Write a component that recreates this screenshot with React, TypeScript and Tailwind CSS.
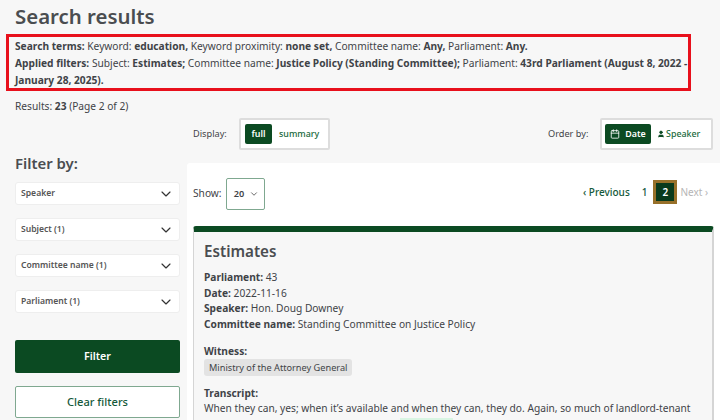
import React from "react";
import { ChevronDown, Calendar, User } from "lucide-react";

function Sel({ label }: { label: string }) {
  return (
    <div className="flex h-[23px] items-center justify-between rounded-[3px] border border-[#eeeeee] bg-white pl-[5px] pr-[5px] text-[8.6px] font-semibold text-[#555555]">
      <span>{label}</span>
      <ChevronDown className="h-[16px] w-[16px] text-[#333333]" strokeWidth={1.75} />
    </div>
  );
}

export default function App() {
  return (
    <div className="relative h-[420px] w-[720px] overflow-hidden bg-[#f7f7f7] font-['Noto_Sans','Open_Sans',sans-serif] text-[#3f4347]">
      <h1 className="h-[34px] pl-[15px] text-[20.4px] font-semibold leading-[32px] text-[#4a4d50]">Search results</h1>
      <div className="mx-[6px] h-[57px] w-[685px] border-[3px] border-[#e8101c] pl-[6px] pr-[2px] pt-[1px] text-[10.2px] leading-[17px]">
        <div><b>Search terms:</b> Keyword: <b>education,</b> Keyword proximity: <b>none set,</b> Committee name: <b>Any,</b> Parliament: <b>Any.</b></div>
        <div className="whitespace-nowrap"><b>Applied filters:</b> Subject: <b>Estimates;</b> Committee name: <b>Justice Policy (Standing Committee);</b> Parliament: <b>43rd Parliament (August 8, 2022 -</b></div>
        <div><b>January 28, 2025).</b></div>
      </div>
      <div className="mt-[7px] pl-[15px] text-[10.2px] leading-[17px]">Results: <b>23</b> (Page 2 of 2)</div>
      <div className="mt-[3px] flex h-[32px] items-center text-[9.2px]">
        <span className="ml-[193px] w-[46px]">Display:</span>
        <div className="flex h-[32px] w-[91px] items-center rounded-[2px] border-2 border-[#dddddd] bg-white pl-[4px] text-[8.9px]">
          <span className="flex h-[20px] w-[27px] items-center justify-center rounded-[2px] bg-[#0b4a22] font-semibold text-white">full</span>
          <span className="ml-[7px] font-medium text-[#1a6a3c]">summary</span>
        </div>
        <span className="ml-[218px] w-[52px]">Order by:</span>
        <div className="flex h-[32px] w-[113px] items-center rounded-[2px] border-2 border-[#dddddd] bg-white pl-[3px] text-[8.9px]">
          <span className="flex h-[20px] w-[46px] items-center justify-center gap-[5px] rounded-[2px] bg-[#0b4a22] font-semibold text-white">
            <Calendar className="h-[10px] w-[10px]" strokeWidth={2} />Date
          </span>
          <span className="ml-[6px] flex items-center gap-[1px] font-medium text-[#1a6a3c]">
            <User className="h-[8px] w-[8px] fill-[#0b4a22] text-[#0b4a22]" strokeWidth={2} />Speaker
          </span>
        </div>
      </div>
      <div className="mt-[13px] flex">
        <aside className="ml-[15px] w-[165px] shrink-0">
          <h2 className="h-[19px] text-[14.9px] font-semibold leading-[1px] text-[#4a4d50]">Filter by:</h2>
          <div className="flex flex-col gap-[13px]">
            <Sel label="Speaker" />
            <Sel label="Subject (1)" />
            <Sel label="Committee name (1)" />
            <Sel label="Parliament (1)" />
          </div>
          <div className="mt-[27px] flex h-[33px] items-center justify-center rounded-[2px] bg-[#0b4a22] text-[10.7px] font-semibold text-white">Filter</div>
          <div className="mt-[13px] flex h-[32px] items-center justify-center rounded-[2px] border border-[#7fa890] bg-white text-[11.1px] font-medium text-[#14593a]">Clear filters</div>
        </aside>
        <main className="ml-[7px] h-[300px] flex-1 rounded-tl-[3px] bg-white pl-[6px]">
          <div className="flex h-[63px] items-start pt-[15px]">
            <span className="mt-[8px] w-[33px] text-[10.2px]">Show:</span>
            <div className="flex h-[32px] w-[39px] items-center justify-center gap-[5px] pl-[2px] rounded-[2px] border border-[#7fa890] text-[9.2px] font-semibold">
              20<ChevronDown className="h-[10px] w-[10px] text-[#333333]" strokeWidth={1.75} />
            </div>
            <div className="ml-[318px] mt-[2px] flex h-[24px] items-center text-[10px]">
              <span className="font-medium text-[#14593a]">‹ Previous</span>
              <span className="ml-[12px] font-medium text-[#14593a]">1</span>
              <span className="ml-[6px] flex h-[24px] w-[24px] items-center justify-center border-[3px] border-[#97702a] bg-[#0a3a1c] font-semibold text-white">2</span>
              <span className="ml-[3px] text-[#b5b5b5]">Next ›</span>
            </div>
          </div>
          <article className="h-[200px] w-[521px] rounded-t-[3px] border-t-[6px] border-r-2 border-l border-[#0b4a22] border-r-[#d5d5d5] border-l-[#d5d5d5] bg-[#f7f7f7] pl-[10px]">
            <h3 className="pt-[6px] text-[15.2px] font-semibold leading-[26px] text-[#4a4d50]">Estimates</h3>
            <div className="mt-[6px] text-[10.2px] leading-[15.7px]">
              <div><b>Parliament:</b> 43</div>
              <div><b>Date:</b> 2022-11-16</div>
              <div><b>Speaker:</b> Hon. Doug Downey</div>
              <div><b>Committee name:</b> Standing Committee on Justice Policy</div>
            </div>
            <div className="mt-[10px] text-[10.2px] font-bold leading-[16px]">Witness:</div>
            <div className="block h-[17px] w-[148px] whitespace-nowrap rounded-[3px] bg-[#e3e3e3] px-[5px] text-[9.2px] leading-[17px]">Ministry of the Attorney General</div>
            <div className="mt-[9px] text-[10.2px] font-bold leading-[16px]">Transcript:</div>
            <div className="whitespace-nowrap text-[10.2px] leading-[15px]">When they can, yes; when it’s available and when they can, they do. Again, so much of landlord-tenant</div>
            <div className="ml-[196px] mt-[2px] h-[6px] w-[53px] bg-[#d9f5e3]" />
          </article>
        </main>
      </div>
    </div>
  );
}
